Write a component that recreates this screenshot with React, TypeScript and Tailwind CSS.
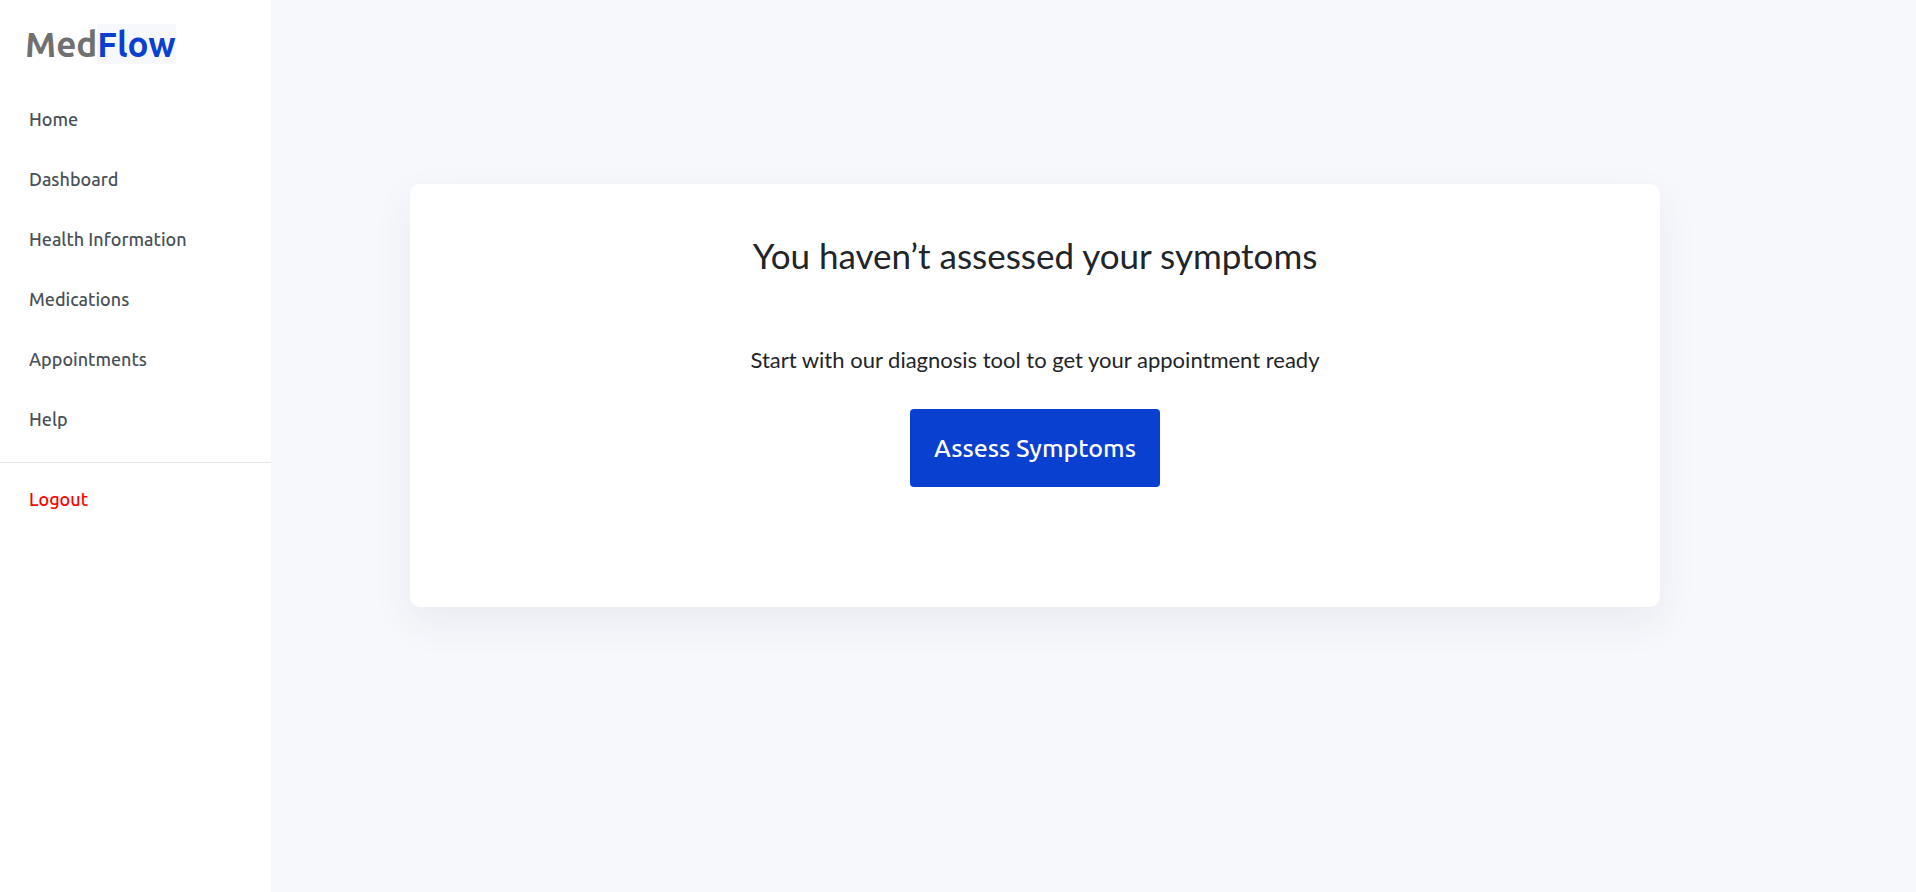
import React from 'react';

interface NavItem {
  label: string;
  href: string;
}

const navItems: NavItem[] = [
  { label: 'Home', href: '#home' },
  { label: 'Dashboard', href: '#dashboard' },
  { label: 'Health Information', href: '#health' },
  { label: 'Medications', href: '#medications' },
  { label: 'Appointments', href: '#appointments' },
  { label: 'Help', href: '#help' },
];

function Sidebar() {
  return (
    <aside className="w-[271px] shrink-0 bg-white font-['Ubuntu','Noto_Sans',sans-serif]">
      <a href="#home" className="flex items-center pt-6 pl-[25px] text-[35px] leading-[40px] font-bold">
        <span className="text-[#707070]">Med</span>
        <span className="bg-[#f6f8fc] text-[#0a40cf]">Flow</span>
      </a>
      <nav className="mt-[25px]">
        <ul>
          {navItems.map((item) => (
            <li key={item.label}>
              <a
                href={item.href}
                className="flex h-[60px] items-center pl-[29px] text-lg font-medium text-[#495057]"
              >
                {item.label}
              </a>
            </li>
          ))}
        </ul>
        <div className="mt-[13px] border-t border-[#e5e5e5] pt-[6px]">
          <a href="#logout" className="flex h-[60px] items-center pl-[29px] text-lg font-medium text-[#ff0000]">
            Logout
          </a>
        </div>
      </nav>
    </aside>
  );
}

function AssessCard() {
  return (
    <section className="flex flex-col items-center rounded-[10px] bg-white px-8 pt-12 pb-[120px] text-center text-[#212529] shadow-[0_15px_40px_rgba(50,50,93,0.07)]">
      <h1 className="text-[35px] leading-[46px]">You haven’t assessed your symptoms</h1>
      <p className="mt-16 text-[22px] leading-[36px]">
        Start with our diagnosis tool to get your appointment ready
      </p>
      <button
        type="button"
        className="mt-[31px] rounded-[4px] bg-[#0a40cf] px-6 py-5 font-['Ubuntu','Noto_Sans',sans-serif] text-[25px] leading-[38px] font-medium text-white"
      >
        Assess Symptoms
      </button>
    </section>
  );
}

export default function App() {
  return (
    <div className="flex min-h-screen bg-[#f6f8fc] font-['Lato',sans-serif]">
      <Sidebar />
      <main className="flex-1 pt-[184px] pr-[256px] pl-[139px]">
        <AssessCard />
      </main>
    </div>
  );
}
